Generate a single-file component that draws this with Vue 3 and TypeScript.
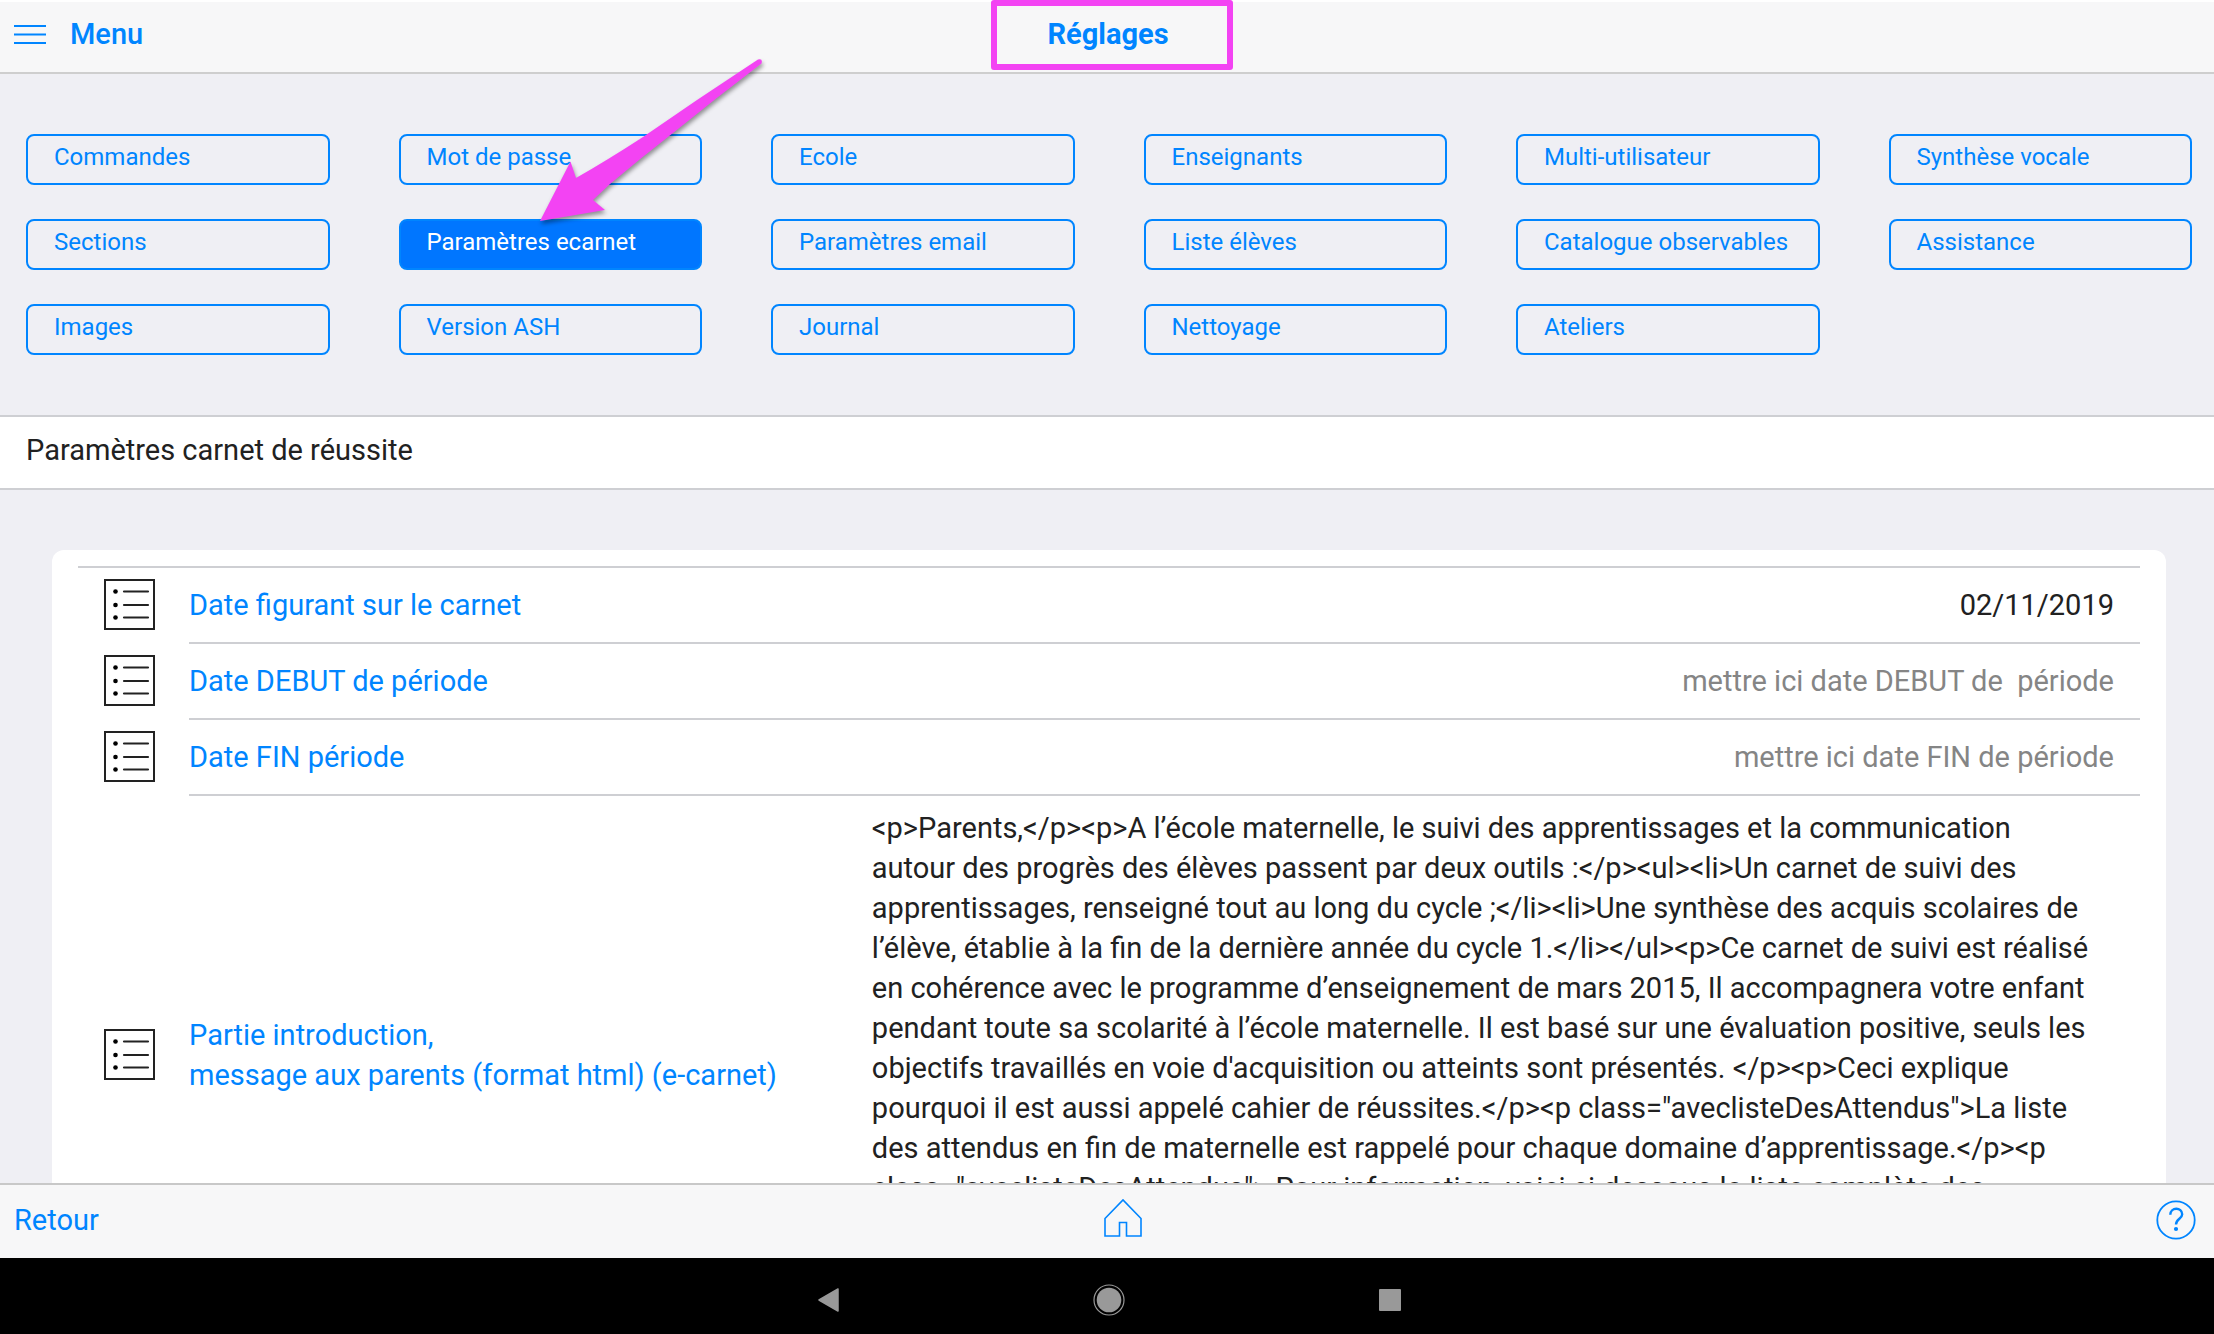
<script setup lang="ts">
import { ref } from 'vue'

const sections: string[] = [
  'Commandes', 'Mot de passe', 'Ecole', 'Enseignants', 'Multi-utilisateur', 'Synthèse vocale',
  'Sections', 'Paramètres ecarnet', 'Paramètres email', 'Liste élèves', 'Catalogue observables', 'Assistance',
  'Images', 'Version ASH', 'Journal', 'Nettoyage', 'Ateliers',
]
const active = ref('Paramètres ecarnet')

interface DateField {
  id: string
  label: string
  value: string
  placeholder: string
}

const dates = ref<DateField[]>([
  { id: 'date-carnet', label: 'Date figurant sur le carnet', value: '02/11/2019', placeholder: '' },
  { id: 'date-debut', label: 'Date DEBUT de période', value: '', placeholder: 'mettre ici date DEBUT de  période' },
  { id: 'date-fin', label: 'Date FIN période', value: '', placeholder: 'mettre ici date FIN de période' },
])

const intro = ref([
  '<p>Parents,</p><p>A l’école maternelle, le suivi des apprentissages et la communication',
  'autour des progrès des élèves passent par deux outils :</p><ul><li>Un carnet de suivi des',
  'apprentissages, renseigné tout au long du cycle ;</li><li>Une synthèse des acquis scolaires de',
  'l’élève, établie à la fin de la dernière année du cycle 1.</li></ul><p>Ce carnet de suivi est réalisé',
  'en cohérence avec le programme d’enseignement de mars 2015, Il accompagnera votre enfant',
  'pendant toute sa scolarité à l’école maternelle. Il est basé sur une évaluation positive, seuls les',
  "objectifs travaillés en voie d'acquisition ou atteints sont présentés. </p><p>Ceci explique",
  'pourquoi il est aussi appelé cahier de réussites.</p><p class="aveclisteDesAttendus">La liste',
  'des attendus en fin de maternelle est rappelé pour chaque domaine d’apprentissage.</p><p',
  'class="aveclisteDesAttendus"> Pour information, voici ci-dessous la liste complète des',
].join('\n'))
</script>

<template>
  <div class="app">
    <header class="navbar">
      <a href="#menu" class="menu">
        <svg width="32" height="20" viewBox="0 0 32 20" aria-hidden="true">
          <path d="M0 2H32M0 10.500H32M0 19H32" stroke="currentColor" stroke-width="1.800" />
        </svg>
        <span>Menu</span>
      </a>
      <h1 class="title">Réglages<span class="frame"></span></h1>
    </header>

    <main class="content">
      <nav class="tabs">
        <button
          v-for="name in sections"
          :key="name"
          type="button"
          class="tab"
          :class="{ active: name === active }"
          @click="active = name"
        >{{ name }}</button>
      </nav>

      <h2 class="heading">Paramètres carnet de réussite</h2>

      <form class="card" @submit.prevent>
        <div class="list">
          <div v-for="field in dates" :key="field.id" class="row">
            <svg class="icon" viewBox="0 0 51 51" aria-hidden="true">
              <rect x="1" y="1" width="49" height="49" fill="none" stroke="#222" stroke-width="2" />
              <path d="M20 12.500H44M20 26H44M20 38.500H44" stroke="#222" stroke-width="2.200" stroke-linecap="round" />
              <circle cx="11.500" cy="12.500" r="2.300" /><circle cx="11.500" cy="26" r="2.300" /><circle cx="11.500" cy="38.500" r="2.300" />
            </svg>
            <div class="body">
              <label :for="field.id">{{ field.label }}</label>
              <input :id="field.id" v-model="field.value" type="text" :placeholder="field.placeholder" />
            </div>
          </div>
          <div class="row">
            <svg class="icon" viewBox="0 0 51 51" aria-hidden="true">
              <rect x="1" y="1" width="49" height="49" fill="none" stroke="#222" stroke-width="2" />
              <path d="M20 12.500H44M20 26H44M20 38.500H44" stroke="#222" stroke-width="2.200" stroke-linecap="round" />
              <circle cx="11.500" cy="12.500" r="2.300" /><circle cx="11.500" cy="26" r="2.300" /><circle cx="11.500" cy="38.500" r="2.300" />
            </svg>
            <div class="body">
              <label for="intro">Partie introduction,<br />message aux parents (format html) (e-carnet)</label>
              <textarea id="intro" v-model="intro" spellcheck="false"></textarea>
            </div>
          </div>
        </div>
      </form>
    </main>

    <footer class="toolbar">
      <a href="#retour">Retour</a>
      <a href="#accueil" class="home" aria-label="Accueil">
        <svg width="40" height="40" viewBox="0 0 40 40" aria-hidden="true">
          <path d="M2 20.500L20 2L38 20.500V38H23.500V24.500H16.500V38H2Z" fill="none" stroke="currentColor" stroke-width="1.600" />
        </svg>
      </a>
      <a href="#aide" class="help" aria-label="Aide">
        <svg width="40" height="40" viewBox="0 0 40 40" aria-hidden="true">
          <circle cx="20" cy="20" r="18.700" fill="none" stroke="currentColor" stroke-width="1.800" />
          <path d="M14.300 14.800C14.300 6.800 26.200 7 26.200 14.300C26.200 18.800 20 18.800 20 24.500" fill="none" stroke="currentColor" stroke-width="2.400" />
          <circle cx="20" cy="29" r="2.100" fill="currentColor" />
        </svg>
      </a>
    </footer>

    <nav class="system">
      <button type="button" aria-label="Précédent">
        <svg width="32" height="32" viewBox="0 0 32 32"><path d="M26 5V27L7 16Z" fill="#999" stroke="#999" stroke-width="1.500" stroke-linejoin="round" /></svg>
      </button>
      <button type="button" aria-label="Écran d’accueil">
        <svg width="32" height="32" viewBox="0 0 32 32"><circle cx="16" cy="16" r="12.300" fill="#999" /><circle cx="16" cy="16" r="15" fill="none" stroke="#999" stroke-width="1.200" /></svg>
      </button>
      <button type="button" aria-label="Applications récentes">
        <svg width="32" height="32" viewBox="0 0 32 32"><rect x="5" y="5" width="22" height="22" rx="1" fill="#999" /></svg>
      </button>
    </nav>

    <svg class="arrow" width="240" height="180" viewBox="0 0 240 180" aria-hidden="true">
      <path d="M10 171L40.500 111.500L46 128Q76 111 113 87L167 50L228 9.500Q233 8 231.500 13.500Q186 48 143 83Q112 107 80 134L63 150L75 160Z" />
    </svg>
  </div>
</template>

<style>
body {
  background: #000;
}
</style>

<style scoped>
.app {
  position: relative;
  display: flex;
  flex-direction: column;
  height: 100vh;
  overflow: hidden;
  background: #efeff4;
  color: #212121;
  font-family: Roboto, "Liberation Sans", sans-serif;
  font-size: 29px;
  line-height: 40px;
}

a,
label {
  color: #0085ff;
  text-decoration: none;
}

.navbar {
  display: grid;
  grid-template-columns: 1fr auto 1fr;
  flex: none;
  padding: 12px 12px 18px 14px;
  border-top: 2px solid #fff;
  border-bottom: 2px solid #cecece;
  background: #f7f7f8;
}

.menu {
  display: flex;
  align-items: center;
  gap: 24px;
  font-weight: 500;
}

.title {
  position: relative;
  margin: 0;
  color: #0085ff;
  font-size: 29px;
  font-weight: 700;
}

.frame {
  position: absolute;
  inset: -14px -64px -16px -56px;
  border: 6px solid #f343f3;
  border-radius: 3px;
}

.content {
  flex: 1;
  min-height: 0;
  overflow: hidden;
}

.tabs {
  display: grid;
  grid-template-columns: repeat(6, 1fr);
  gap: 34px 69px;
  padding: 60px 22px 60px 26px;
}

.tab {
  padding: 0 0 5px 26px;
  border: 2px solid #0085ff;
  border-radius: 8px;
  background: transparent;
  color: #0085ff;
  font-family: inherit;
  font-size: 24px;
  line-height: 42px;
  text-align: left;
  white-space: nowrap;
}

.tab.active {
  background: #0076ff;
  color: #fff;
}

.heading {
  margin: 0;
  padding: 13px 26px 18px;
  border: solid #cecfd3;
  border-width: 2px 0;
  background: #fff;
  font-size: 29px;
  font-weight: 400;
}

.card {
  margin: 60px 48px 0 52px;
  padding: 16px 26px;
  border-radius: 12px;
  background: #fff;
}

.list {
  border-top: 2px solid #cecfd3;
}

.row {
  display: flex;
  align-items: center;
  gap: 34px;
  padding-left: 26px;
}

.icon {
  flex: none;
  width: 51px;
  height: 51px;
  margin-bottom: 3px;
}

.body {
  display: flex;
  flex: 1;
  align-items: center;
  min-height: 74px;
  border-bottom: 2px solid #cecfd3;
}

.body label {
  flex: 0 0 35%;
  white-space: nowrap;
}

input,
textarea {
  box-sizing: border-box;
  flex: 1;
  min-width: 0;
  margin: 0;
  padding: 0 26px 0 0;
  border: 0;
  outline: 0;
  background: transparent;
  color: #212121;
  font: inherit;
}

input {
  text-align: right;
}

input::placeholder {
  color: #858585;
  opacity: 1;
}

textarea {
  height: 518px;
  padding-top: 12px;
  overflow: hidden;
  resize: none;
  white-space: pre;
}

.toolbar {
  display: flex;
  flex: none;
  align-items: center;
  justify-content: space-between;
  height: 69px;
  padding: 0 18px 4px 14px;
  border-top: 2px solid #c8c8c8;
  background: #f7f7f8;
}

.toolbar svg {
  display: block;
}

.home {
  padding-bottom: 4px;
}

.help {
  padding-left: 8px;
}

.system {
  display: flex;
  flex: none;
  align-items: center;
  justify-content: center;
  gap: 249px;
  height: 68px;
  padding: 8px 0 0 3px;
  background: #000;
}

.system button {
  padding: 0;
  border: 0;
  background: none;
}

.system svg {
  display: block;
}

.arrow {
  position: absolute;
  top: 50px;
  left: 530px;
  fill: #f343f3;
  filter: drop-shadow(1px 3px 2px rgba(0, 0, 0, 0.4));
  pointer-events: none;
}
</style>
